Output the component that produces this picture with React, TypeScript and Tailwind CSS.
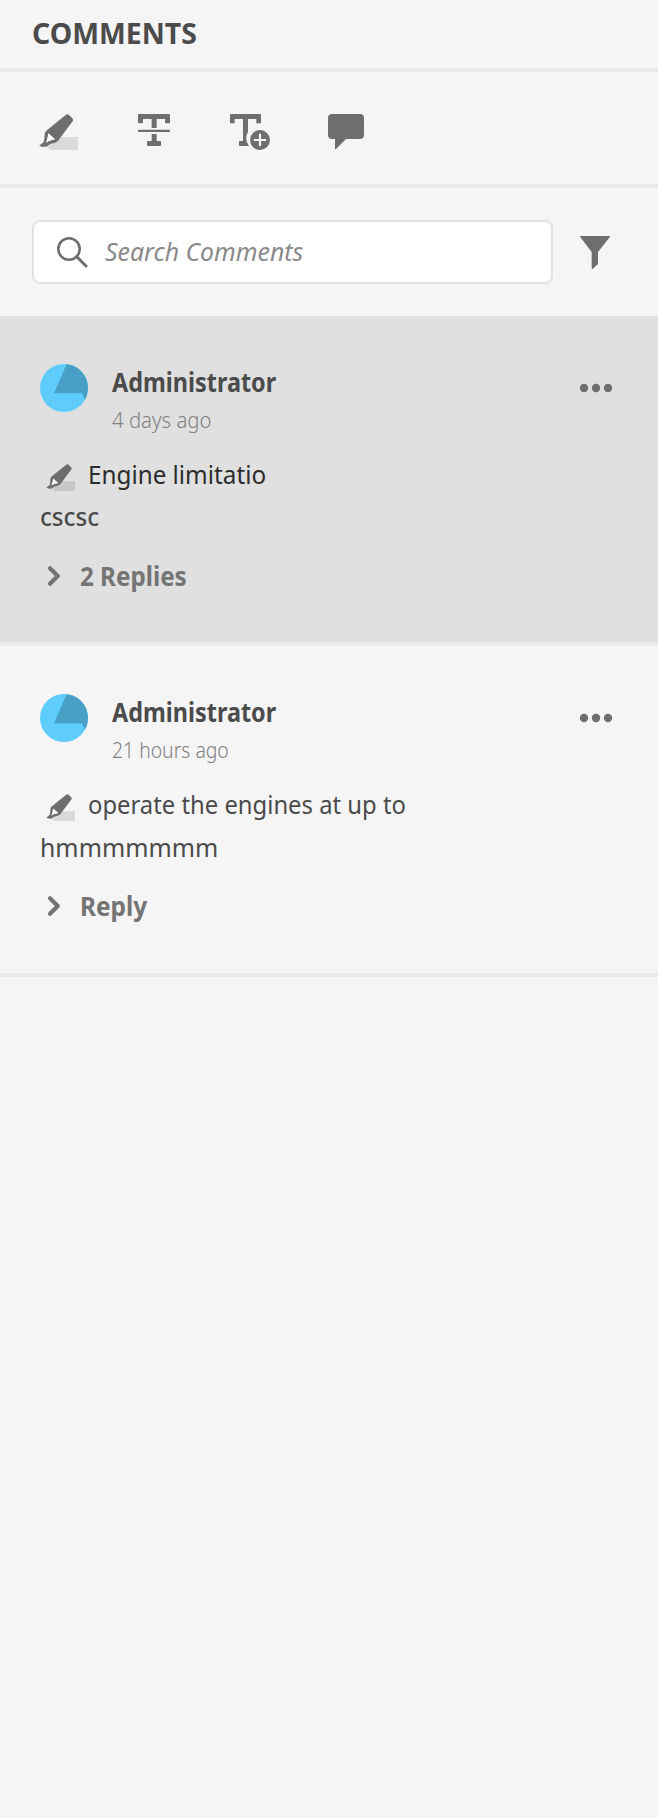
import React from "react";

function Highlighter({ className }: { className: string }) {
  return (
    <svg viewBox="117 342 117 108" className={className}>
      <path d="M178 411H234V450H152Q146 449 141 442Z" fill="#000" fillOpacity="0.11" />
      <path
        fillRule="evenodd"
        fill="#6e6e6e"
        d="M196 345.500Q202 341 207 345L217 355Q221 359 218 364L178 417C174 424 169 427 162 429C152 431 147 434 140 440Q130 442 117.500 437L131 426C133 418 134 410 134 402Q134 397 139 392ZM145 400C144 409 142 418 138 428C145 423 153 421 165 418Z"
      />
      <path d="M145 400C144 409 142 418 138 428C145 423 153 421 165 418Z" fill="#fff" fillOpacity="0.8" />
    </svg>
  );
}

function StrikeText() {
  return (
    <svg viewBox="414 342 96 96" className="h-8 w-8" fill="#6e6e6e">
      <path d="M417 342H507Q510 342 510 345V367Q510 370 507 370H498Q495 370 495 367V357H470V384H455V357H429V367Q429 370 426 370H417Q414 370 414 367V345Q414 342 417 342Z" />
      <rect x="414" y="389.500" width="96" height="6.500" rx="2" />
      <path d="M455 402H470V423H480Q483 423 483 426V435Q483 438 480 438H444Q441 438 441 435V426Q441 423 444 423H455Z" />
    </svg>
  );
}

function InsertText() {
  return (
    <svg viewBox="690 342 120 108" className="h-9 w-10" fill="#6e6e6e">
      <path d="M692 342H781Q783 342 783 344V368Q783 370 781 370H771Q769 370 769 368V357H744V395A40 40 0 0 0 747 438H719Q717 438 717 436V425Q717 423 719 423H729V357H704V368Q704 370 702 370H692Q690 370 690 368V344Q690 342 692 342Z" />
      <circle cx="780" cy="420" r="30" />
      <path d="M780 404V436M764 420H796" stroke="#f5f5f5" strokeWidth="6.500" strokeLinecap="round" />
    </svg>
  );
}

function Bubble() {
  return (
    <svg viewBox="984 342 108 107" className="h-[35.700px] w-9" fill="#6e6e6e">
      <path d="M996 342H1080Q1092 342 1092 354V405Q1092 417 1080 417H1038L1008 447Q1005 450 1005 446V417H996Q984 417 984 405V354Q984 342 996 342Z" />
    </svg>
  );
}

function Avatar() {
  return (
    <svg viewBox="0 0 144 144" className="size-12 shrink-0">
      <clipPath id="avatar-round">
        <circle cx="72" cy="72" r="72" />
      </clipPath>
      <g clipPath="url(#avatar-round)">
        <rect width="144" height="144" fill="#5eccfc" />
        <path d="M80 0L42 87.500H126L136 110H144V0Z" fill="#479fc5" />
      </g>
    </svg>
  );
}

interface Comment {
  author: string;
  time: string;
  timeClass: string;
  quote: string;
  quoteClass: string;
  note: string;
  noteClass: string;
  reply: string;
  replyClass: string;
  rowClass: string;
}

const comments: Comment[] = [
  {
    author: "Administrator",
    time: "4 days ago",
    timeClass: "scale-x-[0.925]",
    quote: "Engine limitatio",
    quoteClass: "text-[#2c2c2c] scale-x-[0.97]",
    note: "cscsc",
    noteClass: "font-medium leading-[44px] scale-x-[0.965]",
    reply: "2 Replies",
    replyClass: "scale-x-[0.93]",
    rowClass: "h-[330px] bg-[#e0e0e0]",
  },
  {
    author: "Administrator",
    time: "21 hours ago",
    timeClass: "scale-x-[0.88]",
    quote: "operate the engines at up to",
    quoteClass: "text-[#4b4b4b] scale-x-[0.953]",
    note: "hmmmmmmm",
    noteClass: "leading-[47px] scale-x-[0.995]",
    reply: "Reply",
    replyClass: "scale-x-[0.94]",
    rowClass: "h-[331px]",
  },
];

function CommentRow({ c }: { c: Comment }) {
  return (
    <article className={`border-b-4 border-[#eaeaea] px-10 pt-12 ${c.rowClass}`}>
      <div className="flex h-[90px] items-start">
        <Avatar />
        <div className="ml-6 flex-1 whitespace-nowrap">
          <div className="w-fit origin-left scale-x-[0.9] text-[26px] leading-[36px] font-bold text-[#4b4b4b]">{c.author}</div>
          <div className={`w-fit origin-left text-[22px] leading-[39px] font-light text-[#808080] ${c.timeClass}`}>{c.time}</div>
        </div>
        <svg viewBox="0 0 34 10" className="mt-[19px] mr-[5px] h-2.5 w-[34px]" fill="#6e6e6e">
          <circle cx="5" cy="5" r="4.200" />
          <circle cx="17" cy="5" r="4.200" />
          <circle cx="29" cy="5" r="4.200" />
        </svg>
      </div>
      <div className="flex h-10">
        <Highlighter className="mt-2.5 ml-[5.500px] h-[27px] w-[29.500px]" />
        <div className={`ml-[13px] origin-left text-[25px] leading-[40px] whitespace-nowrap ${c.quoteClass}`}>{c.quote}</div>
      </div>
      <div className="h-[46px]">
        <div className={`w-fit origin-left text-[25px] text-[#4b4b4b] ${c.noteClass}`}>{c.note}</div>
      </div>
      <div className="mt-4 flex h-10 pl-[7px]">
        <svg viewBox="0 0 14 22" className="mt-[9px] h-[22px] w-3.5" fill="none" stroke="#747474" strokeWidth="4.200" strokeLinecap="round" strokeLinejoin="round">
          <path d="M3 3.200L10.800 11L3 18.800" />
        </svg>
        <div className={`ml-[18.500px] origin-left text-[26px] leading-[40px] font-bold whitespace-nowrap text-[#747474] ${c.replyClass}`}>{c.reply}</div>
      </div>
    </article>
  );
}

export default function App() {
  return (
    <div className="min-h-[1818px] bg-[#f5f5f5] font-['Noto_Sans',sans-serif]">
      <header className="h-[72px] border-b-4 border-[#eaeaea] pl-8">
        <h1 className="w-fit origin-left scale-x-[0.98] text-[29px] leading-[65px] font-bold text-[#4b4b4b]">COMMENTS</h1>
      </header>
      <div className="flex h-[116px] items-start border-b-4 border-[#eaeaea] pt-[42px] pl-[39px]">
        <Highlighter className="h-9 w-[39px]" />
        <div className="ml-[60px]"><StrikeText /></div>
        <div className="ml-[60px]"><InsertText /></div>
        <div className="ml-[58px]"><Bubble /></div>
      </div>
      <div className="flex h-32 items-start pt-8 pl-8">
        <div className="flex h-16 w-[521px] rounded-lg border-2 border-[#e1e1e1] bg-white">
          <svg viewBox="0 0 32 32" className="mt-[15px] ml-[22px] size-8" fill="none" stroke="#6e6e6e">
            <circle cx="13" cy="12" r="10.700" strokeWidth="2.600" />
            <path d="M20.800 19.800L30 29" strokeWidth="3" strokeLinecap="round" />
          </svg>
          <div className="ml-[17px] origin-left scale-x-[0.955] text-[26px] leading-[58px] whitespace-nowrap text-[#8a8a8a] italic">Search Comments</div>
        </div>
        <svg viewBox="750 108 90 100" className="mt-4 ml-[27px] h-[33.300px] w-[30px]" fill="#6e6e6e">
          <path d="M752 108H838Q841 109 839 112L804 156V192L789 206Q785 208 785 205V156L751 112Q749 109 752 108Z" />
        </svg>
      </div>
      {comments.map((c) => (
        <CommentRow key={c.time} c={c} />
      ))}
    </div>
  );
}
